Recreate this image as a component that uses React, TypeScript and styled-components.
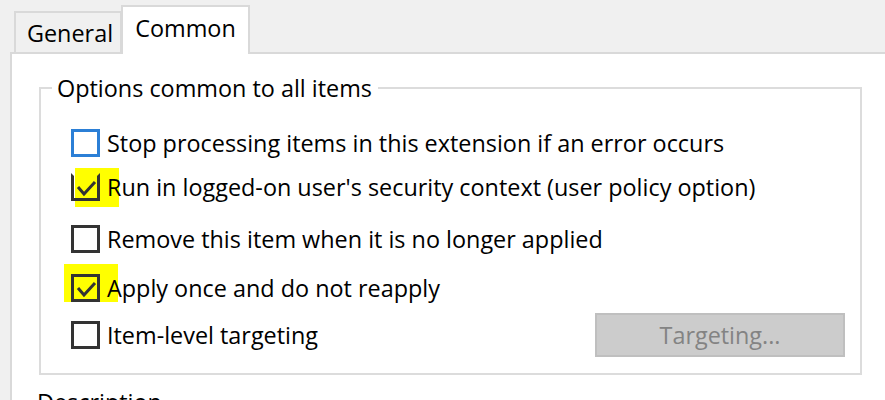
import React from 'react';
import styled, { createGlobalStyle } from 'styled-components';

const Page = createGlobalStyle`
  html, body {
    margin: 0;
    padding: 0;
    background: #f0f0f0;
  }

  body {
    font-family: 'Open Sans', 'Noto Sans', sans-serif;
    font-size: 23.4px;
    color: #000;
  }
`;

const Window = styled.div`
  width: 885px;
  height: 400px;
  overflow: hidden;
  display: flex;
  flex-direction: column;
  background: #f0f0f0;
`;

const TabStrip = styled.div`
  flex: none;
  display: flex;
  align-items: flex-end;
  height: 52px;
  padding-left: 14px;
  position: relative;
  z-index: 1;
`;

const Tab = styled.div<{ $active?: boolean }>`
  box-sizing: border-box;
  display: flex;
  align-items: center;
  justify-content: center;
  border: 2px solid #d9d9d9;
  border-bottom: none;
  background: ${(p) => (p.$active ? '#fff' : '#f0f0f0')};
  height: ${(p) => (p.$active ? '49px' : '41px')};
  width: ${(p) => (p.$active ? '129px' : '108px')};
  margin-bottom: ${(p) => (p.$active ? '-2px' : '0')};
  margin-left: ${(p) => (p.$active ? '-1px' : '0')};
  padding-bottom: ${(p) => (p.$active ? '5px' : '0')};
  padding-left: ${(p) => (p.$active ? '0' : '4px')};
`;

const Panel = styled.div`
  flex: 1;
  min-height: 0;
  margin-left: 10px;
  background: #fff;
  border-top: 2px solid #d9d9d9;
  border-left: 2px solid #d9d9d9;
  padding-left: 27px;
  padding-top: 18px;
`;

const Group = styled.fieldset`
  box-sizing: border-box;
  width: 823px;
  height: 303px;
  margin: 0;
  padding: 0;
  border: 2px solid #dcdcdc;
`;

const Legend = styled.legend`
  margin-left: 11px;
  padding: 0 6px 0 5px;
  line-height: 32px;
`;

const Options = styled.div`
  display: flex;
  flex-direction: column;
  padding: 0 0 0 30px;
`;

const Row = styled.div<{ $gap: number }>`
  position: relative;
  display: flex;
  align-items: center;
  height: 30px;
  margin-top: ${(p) => p.$gap}px;
`;

const Mark = styled.span<{ $left: number; $width: number; $top: number; $height: number }>`
  position: absolute;
  left: ${(p) => p.$left}px;
  top: ${(p) => p.$top}px;
  width: ${(p) => p.$width}px;
  height: ${(p) => p.$height}px;
  background: #ffff00;
`;

const Box = styled.span<{ $focus?: boolean; $noTop?: boolean }>`
  position: relative;
  box-sizing: border-box;
  flex: none;
  width: 29px;
  height: 28px;
  border: 3px solid ${(p) => (p.$focus ? '#2b7fd6' : '#333')};
  border-top-color: ${(p) => (p.$noTop ? 'transparent' : p.$focus ? '#2b7fd6' : '#333')};
  margin-right: 7px;

  svg {
    position: absolute;
    left: 1px;
    top: 1px;
  }
`;

const Label = styled.span`
  position: relative;
  white-space: nowrap;
  line-height: 30px;
`;

const Spacer = styled.div`
  flex: 1;
`;

const Button = styled.div`
  box-sizing: border-box;
  width: 250px;
  height: 44px;
  margin-right: 15px;
  border: 2px solid #bfbfbf;
  background: #cccccc;
  color: #838383;
  display: flex;
  align-items: center;
  justify-content: center;
`;

const Caption = styled.div`
  margin: 11px 0 0 -2px;
`;

function Check() {
  return (
    <svg width="22" height="22" viewBox="0 0 22 22">
      <polyline points="3,10 9,17 20,5" fill="none" stroke="#333" strokeWidth="3" />
    </svg>
  );
}

const rows = [
  { text: 'Stop processing items in this extension if an error occurs', gap: 24, focus: true },
  { text: "Run in logged-on user's security context (user policy option)", gap: 14, checked: true, mark: { left: 4, width: 44, top: -4, height: 39 }, noTop: true },
  { text: 'Remove this item when it is no longer applied', gap: 22 },
  { text: 'Apply once and do not reapply', gap: 19, checked: true, mark: { left: -7, width: 54, top: -9, height: 38 } },
  { text: 'Item-level targeting', gap: 17, button: true },
];

export default function App() {
  return (
    <>
      <Page />
      <Window>
        <TabStrip>
          <Tab>General</Tab>
          <Tab $active>Common</Tab>
        </TabStrip>
        <Panel>
          <Group>
            <Legend>Options common to all items</Legend>
            <Options>
              {rows.map((r) => (
                <Row key={r.text} $gap={r.gap}>
                  {r.mark && <Mark $left={r.mark.left} $width={r.mark.width} $top={r.mark.top} $height={r.mark.height} />}
                  <Box $focus={r.focus} $noTop={r.noTop}>{r.checked && <Check />}</Box>
                  <Label>{r.text}</Label>
                  {r.button && (
                    <>
                      <Spacer />
                      <Button>Targeting...</Button>
                    </>
                  )}
                </Row>
              ))}
            </Options>
          </Group>
          <Caption>Description</Caption>
        </Panel>
      </Window>
    </>
  );
}
